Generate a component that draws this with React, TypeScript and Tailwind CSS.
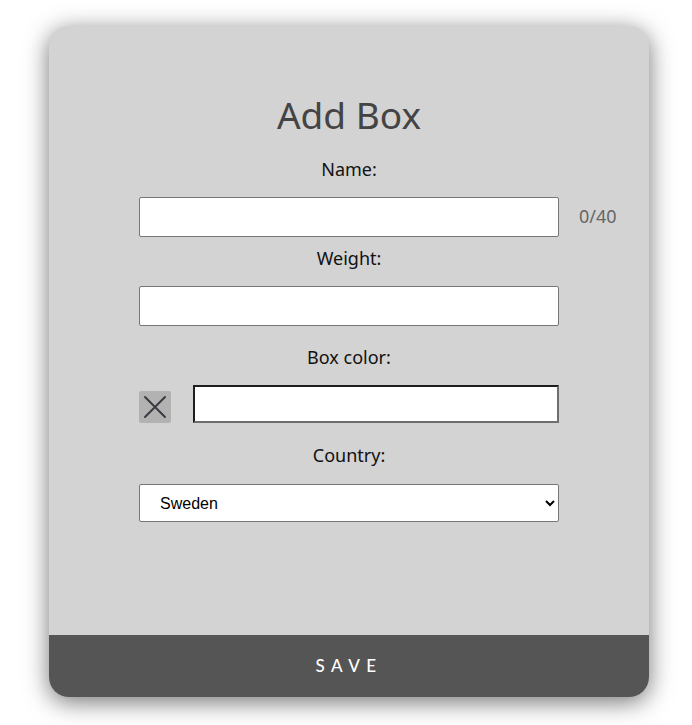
export default function App() {
  return (
    <div className="min-h-screen bg-white pt-[26px] pl-[49px] font-['Noto_Sans',sans-serif]">
      <div className="w-[600px] h-[671px] flex flex-col rounded-[20px] bg-[#d3d3d3] overflow-hidden shadow-[0_5px_24px_rgba(0,0,0,0.55)]">
        <form className="flex-1 flex flex-col items-center pt-[67px]">
          <h1 className="text-[37px] leading-[44px] text-[#444]">Add Box</h1>

          <label className="mt-[18px] text-[18px] leading-[28px] text-[#111]">Name:</label>
          <div className="relative mt-[14px]">
            <input className="w-[420px] h-[40px] bg-white border border-[#767676] rounded-[2px]" />
            <span className="absolute left-[440px] top-[6px] text-[18px] leading-[26px] text-[#666]">0/40</span>
          </div>

          <label className="mt-[7px] text-[18px] leading-[28px] text-[#111]">Weight:</label>
          <input className="mt-[14px] w-[420px] h-[40px] bg-white border border-[#767676] rounded-[2px]" />

          <label className="mt-[17px] text-[18px] leading-[28px] text-[#111]">Box color:</label>
          <div className="mt-[14px] w-[420px] h-[38px] flex items-center gap-[22px]">
            <button type="button" className="w-[32px] h-[32px] mt-[5px] flex items-center justify-center rounded-[2px] bg-[#b2b2b2]">
              <svg width="32" height="32" viewBox="0 0 32 32" fill="none" stroke="#3a3a44" strokeWidth="2" strokeLinecap="round">
                <path d="M6 6 L26 26 M26 6 L6 26" />
              </svg>
            </button>
            <input className="flex-1 h-[38px] bg-white border-2 border-t-[#1e1e1e] border-l-[#1e1e1e] border-b-[#6e6e6e] border-r-[#6e6e6e]" />
          </div>

          <label className="mt-[18px] text-[18px] leading-[28px] text-[#111]">Country:</label>
          <select className="mt-[15px] w-[420px] h-[38px] pl-[16px] pr-[8px] bg-white border border-[#767676] rounded-[2px] text-[16px] font-['Liberation_Sans',sans-serif] text-black">
            <option>Sweden</option>
            <option>Norway</option>
            <option>Denmark</option>
            <option>Finland</option>
          </select>
        </form>

        <button className="h-[62px] bg-[#555555] text-white text-[17px] font-medium tracking-[0.38em] font-['Lato',sans-serif]">
          SAVE
        </button>
      </div>
    </div>
  );
}
